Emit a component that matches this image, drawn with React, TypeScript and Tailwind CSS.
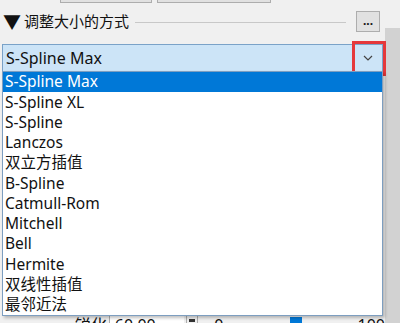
import React from 'react';

const items = [
  'S-Spline Max',
  'S-Spline XL',
  'S-Spline',
  'Lanczos',
  '双立方插值',
  'B-Spline',
  'Catmull-Rom',
  'Mitchell',
  'Bell',
  'Hermite',
  '双线性插值',
  '最邻近法',
];

const font = { fontFamily: '"Noto Sans", "Noto Sans CJK SC", sans-serif' };

export default function App() {
  return (
    <div className="w-[400px] h-[323px] overflow-hidden flex bg-[#f0f0f0] text-[#111]" style={font}>
      {/* Main panel */}
      <div className="w-[385px] flex flex-col">
        {/* bottoms of the toolbar buttons */}
        <div className="h-[3px] shrink-0 flex">
          <div className="ml-[60px] w-[92px] h-full border-x border-b border-[#adadad] bg-[#e1e1e1]" />
          <div className="ml-[5px] w-[114px] h-full border-x border-b border-[#adadad] bg-[#e1e1e1]" />
        </div>

        {/* group header */}
        <div className="mt-[8px] h-[21px] shrink-0 flex items-center pl-[3px] pr-[5px]">
          <span className="text-[18px] leading-none mr-[3px]">▼</span>
          <span className="text-[15px] leading-none">调整大小的方式</span>
          <div className="flex-1 h-px bg-[#c8c8c8] ml-[6px] mr-[10px] mt-[1px]" />
          <button className="w-[24px] h-[21px] border border-[#adadad] bg-[#e1e1e1] flex items-end justify-center pb-[4px] text-[12px] leading-none font-bold">
            ...
          </button>
        </div>

        {/* combo box with open list */}
        <div className="relative shrink-0 mt-[12px] mx-[2px]">
          <div className="h-[28px] flex items-center bg-[#cce4f7] border border-[#7aa2c8]">
            <span className="pl-[3px] text-[16px] leading-none flex-1">S-Spline Max</span>
            <div className="w-[28px] h-full flex items-center justify-center">
              <svg width="10" height="6" viewBox="0 0 10 6" fill="none">
                <path d="M1 1 L5 5 L9 1" stroke="#444" strokeWidth="1.2" />
              </svg>
            </div>
          </div>

          {/* red highlight around the arrow */}
          <div className="absolute left-[350px] top-[-3px] w-[34px] h-[35px] border-[3px] border-[#e5383b]" />

          {/* drop-down list */}
          <div className="absolute left-0 top-[27px] w-[381px] bg-white border border-[#7d9ec0] shadow-[2px_2px_3px_rgba(0,0,0,0.25)] z-10">
            {items.map((it, i) => (
              <div
                key={it}
                className={`h-[20.25px] flex items-center pl-[2px] text-[15.5px] leading-none ${
                  i === 0 ? 'bg-[#0078d7] text-white' : ''
                }`}
              >
                {it}
              </div>
            ))}
          </div>
        </div>

        {/* content underneath the list */}
        <div className="mt-[241px] h-[24px] shrink-0 flex items-center text-[16px] leading-none">
          <span className="ml-[75px] w-[35px]">锐化</span>
          <div className="w-[78px] h-[24px] border-l border-[#adadad] bg-white flex items-center pl-[5px]">60.00</div>
          <div className="ml-[2px] w-[12px] h-[24px] border-x border-[#adadad] flex justify-center">
            <div className="w-[6px] h-[3px] bg-[#333] mt-[6px]" />
          </div>
          <span className="ml-[16px] w-[14px]">0</span>
          <div className="w-[124px] h-[24px] relative flex items-center">
            <div className="w-full h-[2px] bg-[#d6d6d6]" />
            <div className="absolute left-[62px] top-[4px] w-[12px] h-[20px] bg-[#0078d7]" />
          </div>
          <span className="ml-[10px]">100</span>
        </div>
      </div>

      {/* scrollbar strip */}
      <div className="w-[15px] flex flex-col">
        <div className="h-[28px] shrink-0 bg-[#f0f0f0]" />
        <div className="flex-1 bg-[#d2d2d2]" />
      </div>
    </div>
  );
}
